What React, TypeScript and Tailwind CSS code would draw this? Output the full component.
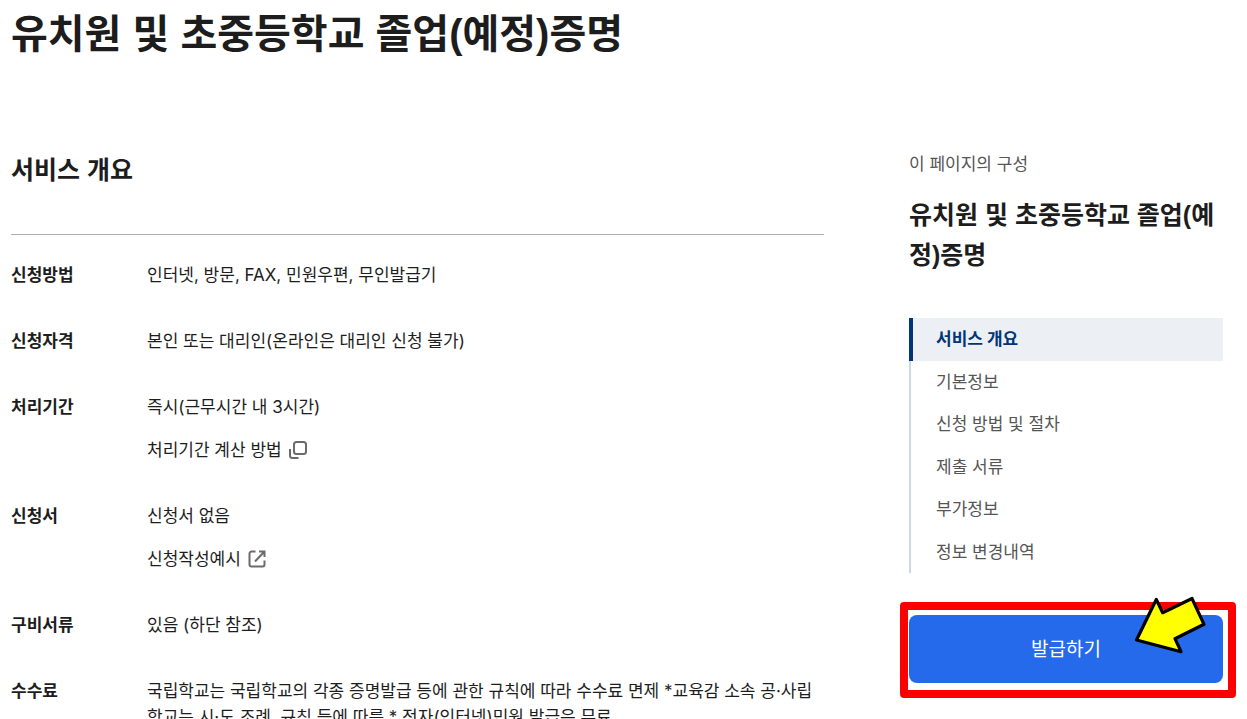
import type { ReactNode } from "react";

const sections = [
  "서비스 개요",
  "기본정보",
  "신청 방법 및 절차",
  "제출 서류",
  "부가정보",
  "정보 변경내역",
];

function PopupIcon() {
  return (
    <svg width="20" height="20" viewBox="0 0 20 20" fill="none" stroke="#6b6b6b" strokeWidth="2" aria-hidden="true">
      <rect x="6" y="2" width="12" height="12" rx="2.500" />
      <path d="M2 9v6.500a2.500 2.500 0 0 0 2.500 2.500H10.500" />
    </svg>
  );
}

function ExternalIcon() {
  return (
    <svg width="20" height="20" viewBox="0 0 20 20" fill="none" stroke="#6b6b6b" strokeWidth="2" aria-hidden="true">
      <path d="M8.500 2.500H4.500a2 2 0 0 0-2 2v11a2 2 0 0 0 2 2h11a2 2 0 0 0 2-2v-4" />
      <path d="M12 2.500h5.500V8M17.500 2.500L8 12.500" />
    </svg>
  );
}

function Row({ label, children }: { label: string; children: ReactNode }) {
  return (
    <div className="flex">
      <dt className="w-[136px] shrink-0 font-bold">{label}</dt>
      <dd className="flex min-w-0 flex-1 flex-col gap-[17px]">{children}</dd>
    </div>
  );
}

function Pointer() {
  return (
    <svg
      className="pointer-events-none absolute -top-4 right-5"
      width="80"
      height="64"
      viewBox="0 0 80 64"
      aria-hidden="true"
    >
      <path
        d="M8.500 46L28.300 5.500L34.700 18.700L64 4.500L76 30.300L47 44.700L53 57.700Z"
        fill="#ffff00"
        stroke="#000"
        strokeWidth="3.200"
        strokeLinejoin="round"
      />
    </svg>
  );
}

export default function App() {
  return (
    <div className="h-screen overflow-hidden bg-white pl-[11px] pr-6 font-['Inter','Noto_Sans_CJK_KR',sans-serif] text-[17px] leading-[26px] text-[#1d1d1d]">
      <h1 className="pt-1 font-['Liberation_Sans','Noto_Sans_CJK_KR',sans-serif] text-[40px] leading-[60px] font-bold">
        유치원 및 초중등학교 졸업(예정)증명
      </h1>
      <div className="mt-[86px] flex items-start gap-[85px]">
        <main className="min-w-0 flex-1">
          <h2 className="border-b border-[#b0b0b0] pb-11 font-['Liberation_Sans','Noto_Sans_CJK_KR',sans-serif] text-[25px] leading-[40px] font-bold">
            서비스 개요
          </h2>
          <dl className="mt-[27px] flex flex-col gap-10">
            <Row label="신청방법">
              <p>인터넷, 방문, FAX, 민원우편, 무인발급기</p>
            </Row>
            <Row label="신청자격">
              <p>본인 또는 대리인(온라인은 대리인 신청 불가)</p>
            </Row>
            <Row label="처리기간">
              <p>즉시(근무시간 내 3시간)</p>
              <a href="#period" className="flex items-center gap-1.5">
                처리기간 계산 방법
                <PopupIcon />
              </a>
            </Row>
            <Row label="신청서">
              <p>신청서 없음</p>
              <a href="#example" className="flex items-center gap-1.5">
                신청작성예시
                <ExternalIcon />
              </a>
            </Row>
            <Row label="구비서류">
              <p>있음 (하단 참조)</p>
            </Row>
            <Row label="수수료">
              <p>
                국립학교는 국립학교의 각종 증명발급 등에 관한 규칙에 따라 수수료 면제 *교육감 소속 공·사립학교는 시·도 조례, 규칙 등에 따름 * 전자(인터넷)민원 발급은 무료
              </p>
            </Row>
          </dl>
        </main>
        <aside className="w-[314px] shrink-0 pt-px">
          <p className="text-[#555555]">이 페이지의 구성</p>
          <p className="mt-[18px] font-['Liberation_Sans','Noto_Sans_CJK_KR',sans-serif] text-[25px] leading-[40px] font-bold">
            유치원 및 초중등학교 졸업(예정)증명
          </p>
          <nav aria-label="이 페이지의 구성" className="mt-[43px]">
            <ul className="grid h-[255px] grid-rows-6">
              {sections.map((name, i) => (
                <li key={name} className="flex">
                  <a
                    href={`#section-${i + 1}`}
                    aria-current={i === 0 ? "true" : undefined}
                    className={
                      i === 0
                        ? "flex flex-1 items-center border-l-4 border-[#003675] bg-[#ecf0f5] pl-[23px] font-bold text-[#003675]"
                        : "flex flex-1 items-center border-l-2 border-[#cdd8e5] pl-[25px] text-[#555555]"
                    }
                  >
                    {name}
                  </a>
                </li>
              ))}
            </ul>
          </nav>
          <div className="relative -mr-[13px] -ml-[9px] mt-[29px] rounded-[4px] border-8 border-[#ff0000] pt-[5px] pr-[5px] pb-[7px] pl-px">
            <button type="button" className="h-[68px] w-full rounded-lg bg-[#256aeb] pt-0.5 text-[19px] text-white">
              발급하기
            </button>
            <Pointer />
          </div>
        </aside>
      </div>
    </div>
  );
}
